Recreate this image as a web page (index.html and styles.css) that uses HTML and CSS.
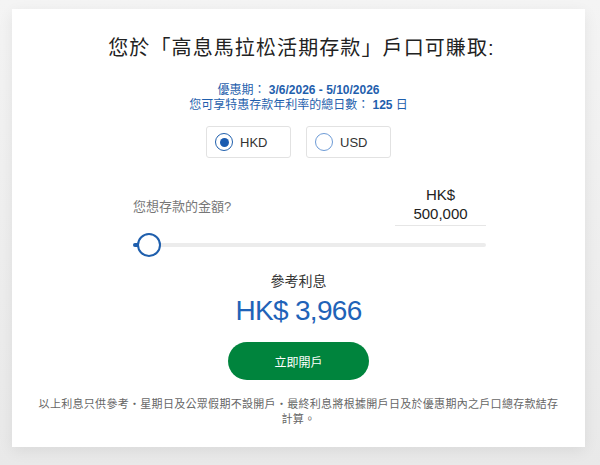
FILE: index.html
```html
<!DOCTYPE html>
<html lang="zh-Hant">
<head>
<meta charset="utf-8">
<link rel="stylesheet" href="styles.css">
</head>
<body>
<div class="page">
  <div class="card">
    <h1 class="title">您於「高息馬拉松活期存款」戶口可賺取:</h1>
    <div class="promo">
      <div>優惠期： <b>3/6/2026 - 5/10/2026</b></div>
      <div>您可享特惠存款年利率的總日數： <b>125</b> 日</div>
    </div>
    <div class="currencies">
      <label class="radio-box"><span class="radio checked"></span><span class="radio-label">HKD</span></label>
      <label class="radio-box"><span class="radio"></span><span class="radio-label">USD</span></label>
    </div>
    <div class="amount-row">
      <div class="amount-label">您想存款的金額?</div>
      <div class="amount-input">
        <div class="cur">HK$</div>
        <div class="val">500,000</div>
      </div>
    </div>
    <div class="slider">
      <div class="track"><div class="fill"></div></div>
      <div class="thumb"></div>
    </div>
    <div class="result-label">參考利息</div>
    <div class="result">HK$ 3,966</div>
    <div class="btn-wrap"><button class="btn">立即開戶</button></div>
    <p class="note">以上利息只供參考・星期日及公眾假期不設開戶・最終利息將根據開戶日及於優惠期內之戶口總存款結存計算。</p>
  </div>
</div>
</body>
</html>
```

FILE: styles.css
```css
* { box-sizing: border-box; }
html, body { margin: 0; padding: 0; }
body {
  width: 600px;
  height: 465px;
  background: linear-gradient(#f4f4f4, #e9e9e9);
  font-family: "Liberation Sans", Arial, "Noto Sans CJK TC", sans-serif;
  overflow: hidden;
}
.page {
  padding: 9px 15px 0 12px;
}
.card {
  width: 573px;
  height: 438px;
  background: #fff;
  box-shadow: 0 4px 14px rgba(0,0,0,0.07);
  padding-top: 27px;
  display: flex;
  flex-direction: column;
  align-items: center;
}
.title {
  margin: 0;
  font-weight: normal;
  font-size: 20px;
  line-height: 24px;
  letter-spacing: 1.1px;
  color: #222;
  margin-left: 6px;
}
.promo {
  margin-top: 23px;
  font-size: 12px;
  line-height: 14.5px;
  color: #1f5fad;
  text-align: center;
}
.promo b { font-weight: bold; }
.currencies {
  margin-top: 14px;
  display: flex;
  gap: 15px;
}
.radio-box {
  width: 85px;
  height: 32px;
  border: 1px solid #e2e2e2;
  border-radius: 3px;
  display: flex;
  align-items: center;
  padding-left: 8px;
  gap: 7px;
}
.radio {
  width: 18px;
  height: 18px;
  border-radius: 50%;
  border: 1.5px solid #6d9bd6;
  display: flex;
  align-items: center;
  justify-content: center;
}
.radio.checked { border-color: #1f5fad; }
.radio.checked::after {
  content: "";
  width: 9px;
  height: 9px;
  border-radius: 50%;
  background: #1a5bb0;
}
.radio-label {
  font-size: 13px;
  color: #333;
}
.amount-row {
  margin-top: 27px;
  width: 353px;
  margin-left: 22px;
  display: flex;
  justify-content: space-between;
  align-items: flex-start;
}
.amount-label {
  margin-top: 11px;
  font-size: 13px;
  color: #777;
}
.amount-input {
  width: 91px;
  border-bottom: 1px solid #e6e6e6;
  text-align: center;
  color: #222;
  padding-bottom: 2px;
}
.cur { font-size: 15px; line-height: 19px; }
.val { font-size: 15px; line-height: 19px; }
.slider {
  position: relative;
  width: 353px;
  margin-left: 22px;
  height: 26px;
  margin-top: 6px;
}
.track {
  position: absolute;
  left: 0; right: 0; top: 11px;
  height: 4px;
  background: #ececec;
  border-radius: 2px;
}
.fill {
  width: 10px;
  height: 4px;
  background: #1f5fad;
  border-radius: 2px;
}
.thumb {
  position: absolute;
  left: 4px;
  top: 1px;
  width: 24px;
  height: 24px;
  border-radius: 50%;
  border: 2px solid #1f5fad;
  background: #fff;
}
.result-label {
  margin-top: 14px;
  font-size: 14px;
  color: #333;
  line-height: 18px;
}
.result {
  margin-top: 5px;
  font-size: 28px;
  line-height: 32px;
  color: #1f63b8;
  letter-spacing: -0.7px;
}
.btn-wrap { margin-top: 15px; }
.btn {
  width: 141px;
  height: 38px;
  border: none;
  border-radius: 19px;
  background: #00843d;
  color: #fff;
  font-family: inherit;
  font-size: 12px;
}
.note {
  margin: 16px 0 0;
  width: 528px;
  text-align: center;
  font-family: "Noto Sans CJK TC", sans-serif;
  font-size: 11px;
  letter-spacing: 0.3px;
  line-height: 15px;
  color: #666;
}
```
